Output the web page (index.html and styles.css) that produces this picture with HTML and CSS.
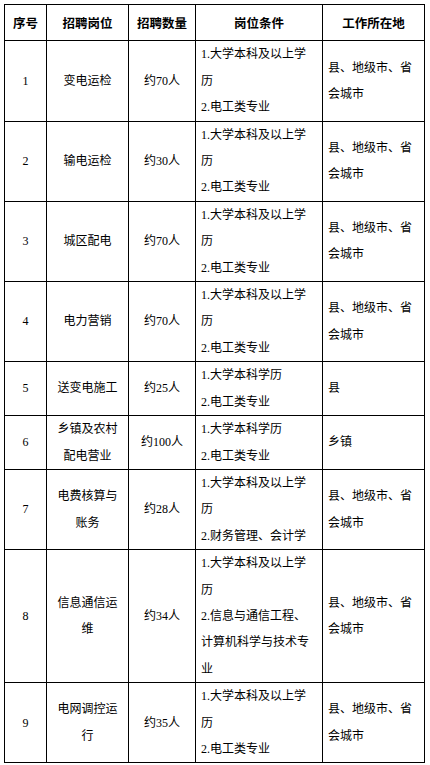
FILE: index.html
```html
<!DOCTYPE html>
<html lang="zh-CN">
<head>
<meta charset="utf-8">
<title>招聘岗位</title>
<link rel="stylesheet" href="styles.css">
</head>
<body>
<table class="jobs">
  <colgroup>
    <col class="c-no">
    <col class="c-pos">
    <col class="c-num">
    <col class="c-req">
    <col class="c-loc">
  </colgroup>
  <thead>
    <tr>
      <th>序号</th>
      <th>招聘岗位</th>
      <th>招聘数量</th>
      <th>岗位条件</th>
      <th>工作所在地</th>
    </tr>
  </thead>
  <tbody>
    <tr>
      <td class="ctr">1</td>
      <td class="ctr pos">变电运检</td>
      <td class="ctr">约70人</td>
      <td class="req">1.大学本科及以上学历<br>2.电工类专业</td>
      <td class="loc">县、地级市、省会城市</td>
    </tr>
    <tr>
      <td class="ctr">2</td>
      <td class="ctr pos">输电运检</td>
      <td class="ctr">约30人</td>
      <td class="req">1.大学本科及以上学历<br>2.电工类专业</td>
      <td class="loc">县、地级市、省会城市</td>
    </tr>
    <tr>
      <td class="ctr">3</td>
      <td class="ctr pos">城区配电</td>
      <td class="ctr">约70人</td>
      <td class="req">1.大学本科及以上学历<br>2.电工类专业</td>
      <td class="loc">县、地级市、省会城市</td>
    </tr>
    <tr>
      <td class="ctr">4</td>
      <td class="ctr pos">电力营销</td>
      <td class="ctr">约70人</td>
      <td class="req">1.大学本科及以上学历<br>2.电工类专业</td>
      <td class="loc">县、地级市、省会城市</td>
    </tr>
    <tr>
      <td class="ctr">5</td>
      <td class="ctr pos">送变电施工</td>
      <td class="ctr">约25人</td>
      <td class="req">1.大学本科学历<br>2.电工类专业</td>
      <td class="loc">县</td>
    </tr>
    <tr>
      <td class="ctr">6</td>
      <td class="ctr pos">乡镇及农村配电营业</td>
      <td class="ctr">约100人</td>
      <td class="req">1.大学本科学历<br>2.电工类专业</td>
      <td class="loc">乡镇</td>
    </tr>
    <tr>
      <td class="ctr">7</td>
      <td class="ctr pos">电费核算与账务</td>
      <td class="ctr">约28人</td>
      <td class="req">1.大学本科及以上学历<br>2.财务管理、会计学</td>
      <td class="loc">县、地级市、省会城市</td>
    </tr>
    <tr>
      <td class="ctr">8</td>
      <td class="ctr pos">信息通信运维</td>
      <td class="ctr">约34人</td>
      <td class="req">1.大学本科及以上学历<br>2.信息与通信工程、计算机科学与技术专业</td>
      <td class="loc">县、地级市、省会城市</td>
    </tr>
    <tr>
      <td class="ctr">9</td>
      <td class="ctr pos">电网调控运行</td>
      <td class="ctr">约35人</td>
      <td class="req">1.大学本科及以上学历<br>2.电工类专业</td>
      <td class="loc">县、地级市、省会城市</td>
    </tr>
  </tbody>
</table>
</body>
</html>
```

FILE: styles.css
```css
html, body {
  margin: 0;
  padding: 0;
  background: #ffffff;
}

body {
  padding: 4px 0 0 4px;
  font-family: "Liberation Serif", "Noto Sans CJK SC", serif;
  font-size: 12px;
  color: #000000;
}

.jobs {
  border-collapse: collapse;
  table-layout: fixed;
  width: 420px;
}

.c-no { width: 42px; }
.c-pos { width: 82px; }
.c-num { width: 67px; }
.c-req { width: 127px; }
.c-loc { width: 102px; }

.jobs th,
.jobs td {
  border: 1px solid #000000;
  vertical-align: middle;
  line-height: 26.4px;
  padding: 0 5px;
  word-break: break-all;
}

.jobs th {
  font-family: "Noto Sans CJK SC", sans-serif;
  font-weight: 700;
  font-size: 12.5px;
  text-align: center;
  padding: 5px 3px 4px;
}

.ctr {
  text-align: center;
}

.pos {
  padding: 0 6px;
}

.req {
  text-align: left;
  padding: 0 7px 0 5px;
}

.loc {
  text-align: left;
  padding: 2px 5px 0 6px;
}
```
